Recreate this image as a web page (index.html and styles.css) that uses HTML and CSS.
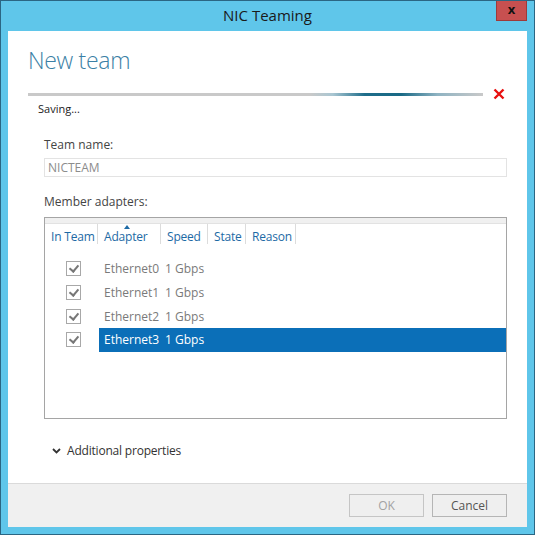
FILE: index.html
```html
<!DOCTYPE html>
<html lang="en">
<head>
    <meta charset="UTF-8">
    <title>NIC Teaming</title>
    <link rel="stylesheet" href="styles.css">
</head>
<body>
    <div class="window">
        <div class="titlebar">
            <span></span>
            <div class="title">NIC Teaming</div>
            <div class="close-btn">x</div>
        </div>

        <div class="dialog">
            <div class="content">
                <h1>New team</h1>

                <div class="progress-row">
                    <div class="progress-bar"></div>
                    <svg class="cancel-x" width="12" height="12" viewBox="0 0 12 12">
                        <path d="M1.5 1.5 L10.5 10.5 M10.5 1.5 L1.5 10.5" stroke="#e8100f" stroke-width="2.4" />
                    </svg>
                </div>
                <div class="status">Saving...</div>

                <div class="form">
                    <label class="field-label">Team name:</label>
                    <div class="text-input">NICTEAM</div>

                    <label class="field-label adapters-label">Member adapters:</label>
                    <div class="list-box">
                        <div class="list-top"></div>
                        <div class="list-head">
                            <div class="col col-team">In Team</div>
                            <div class="col col-adapter">
                                <span class="sort-arrow"></span>
                                Adapter
                            </div>
                            <div class="col col-speed">Speed</div>
                            <div class="col col-state">State</div>
                            <div class="col col-reason">Reason</div>
                        </div>
                        <div class="list-rows">
                            <div class="row">
                                <div class="cell-check"><span class="checkbox"></span></div>
                                <div class="row-data"><span class="name">Ethernet0</span><span>1 Gbps</span></div>
                            </div>
                            <div class="row">
                                <div class="cell-check"><span class="checkbox"></span></div>
                                <div class="row-data"><span class="name">Ethernet1</span><span>1 Gbps</span></div>
                            </div>
                            <div class="row">
                                <div class="cell-check"><span class="checkbox"></span></div>
                                <div class="row-data"><span class="name">Ethernet2</span><span>1 Gbps</span></div>
                            </div>
                            <div class="row">
                                <div class="cell-check"><span class="checkbox"></span></div>
                                <div class="row-data selected"><span class="name">Ethernet3</span><span>1 Gbps</span></div>
                            </div>
                        </div>
                    </div>

                    <div class="more">
                        <svg width="9" height="6" viewBox="0 0 9 6">
                            <path d="M1 1 L4.5 4.5 L8 1" fill="none" stroke="#333" stroke-width="1.8" />
                        </svg>
                        Additional properties
                    </div>
                </div>
            </div>

            <div class="footer">
                <button class="btn btn-disabled">OK</button>
                <button class="btn">Cancel</button>
            </div>
        </div>
    </div>
</body>
</html>
```

FILE: styles.css
```css
/* NIC Teaming dialog, Server 2012 style */
body {
    margin: 0;
    font-family: "Open Sans", "Noto Sans", sans-serif;
    font-size: 12px;
    background: #ffffff;
}

.window {
    width: 535px;
    height: 535px;
    box-sizing: border-box;
    border: 1px solid #2b6683;
    background-color: #5fc6ea;
    display: flex;
    flex-direction: column;
}

.titlebar {
    height: 30px;
    display: grid;
    grid-template-columns: 1fr auto 1fr;
}

.title {
    font-size: 15px;
    color: #1a1a1a;
    line-height: 29px;
}

.close-btn {
    justify-self: end;
    width: 31px;
    height: 20px;
    margin-right: 7px;
    background-color: #c75050;
    border: 1px solid #9e3a3a;
    border-top: none;
    box-sizing: border-box;
    color: #111;
    font-weight: bold;
    font-size: 13px;
    line-height: 16px;
    text-align: center;
}

.dialog {
    flex: 1;
    margin: 0 7px 7px 7px;
    background: white;
    display: flex;
    flex-direction: column;
}

.content {
    flex: 1;
    padding: 14px 0 0 20px;
}

h1 {
    margin: 0;
    font-size: 23px;
    font-weight: 300;
    color: #3b7fa5;
    line-height: 30px;
    letter-spacing: -0.3px;
}

.progress-row {
    display: flex;
    align-items: center;
    margin-top: 12px;
    height: 14px;
}

.progress-bar {
    width: 455px;
    height: 3px;
    background: linear-gradient(to right, #c9c9c9 0%, #c9c9c9 62%, #a9c6d2 67%, #1e6d8a 74%, #196985 82%, #8fb3c2 90%, #c9c9c9 100%);
}

.cancel-x {
    margin-left: 10px;
}

.status {
    margin: 0 0 0 10px;
    font-size: 11px;
    line-height: 16px;
    color: #222;
}

.form {
    padding-left: 16px;
    width: 463px;
}

.field-label {
    display: block;
    margin-top: 20px;
    color: #444;
    line-height: 16px;
}

.text-input {
    margin-top: 5px;
    height: 19px;
    border: 1px solid #e3e3e3;
    box-sizing: border-box;
    padding-left: 3px;
    color: #8c8c8c;
    line-height: 17px;
}

.adapters-label {
    margin-top: 17px;
}

.list-box {
    margin-top: 7px;
    height: 202px;
    border: 1px solid #a5a5a5;
    box-sizing: border-box;
}

.list-top {
    height: 5px;
    background: #f0f0f0;
    border-bottom: 1px solid #e2e2e2;
}

.list-head {
    display: flex;
    height: 24px;
    color: #1d6aa5;
    letter-spacing: -0.2px;
}

.col {
    box-sizing: border-box;
    padding: 0 0 0 6px;
    border-right: 1px solid #dcdcdc;
    height: 20px;
    line-height: 25px;
    white-space: nowrap;
    position: relative;
}

.col-team { width: 53px; }
.col-adapter { width: 63px; }
.col-speed { width: 47px; }
.col-state { width: 38px; }
.col-reason { width: 50px; }

.sort-arrow {
    position: absolute;
    left: 26px;
    top: 1px;
    border-left: 3px solid transparent;
    border-right: 3px solid transparent;
    border-bottom: 4px solid #1d6aa5;
}

.list-rows {
    padding-top: 9px;
}

.row {
    display: flex;
    height: 23.7px;
    align-items: center;
}

.cell-check {
    width: 54px;
    display: flex;
    justify-content: center;
}

.checkbox {
    width: 13px;
    height: 13px;
    border: 1px solid #a8a8a8;
    position: relative;
    margin-left: 3px;
}

.checkbox::after {
    content: "";
    position: absolute;
    left: 4px;
    top: 1px;
    width: 4px;
    height: 7px;
    border-right: 2px solid #777;
    border-bottom: 2px solid #777;
    transform: rotate(40deg);
}

.row-data {
    flex: 1;
    height: 24px;
    display: flex;
    align-items: center;
    padding-left: 5px;
    color: #7a7a7a;
}

.row-data .name {
    width: 61px;
}

.row-data.selected {
    background-color: #0b6fb8;
    color: white;
}

.more {
    margin-top: 23px;
    display: flex;
    align-items: center;
    gap: 6px;
    padding-left: 8px;
    color: #333;
    letter-spacing: -0.2px;
}

.footer {
    height: 43px;
    background: #f0f0f0;
    border-top: 1px solid #dadada;
    display: flex;
    justify-content: flex-end;
    align-items: center;
    gap: 8px;
    padding-right: 20px;
}

.btn {
    width: 75px;
    height: 23px;
    background: #efefef;
    border: 1px solid #b5b5b5;
    font-family: "Open Sans", "Noto Sans", sans-serif;
    font-size: 12px;
    color: #555;
}

.btn-disabled {
    color: #a2a2a2;
    border-color: #c5c5c5;
}
```
